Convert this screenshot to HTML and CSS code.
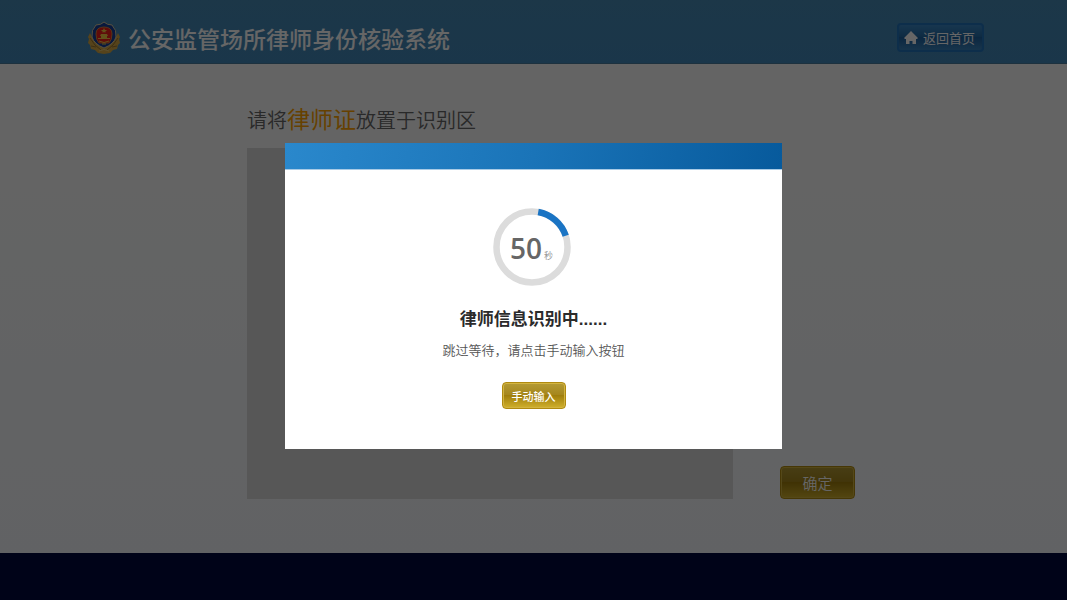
FILE: index.html
```html
<!DOCTYPE html>
<html lang="zh-CN">
<head>
    <meta charset="UTF-8">
    <meta name="viewport" content="width=device-width, initial-scale=1.0">
    <title>公安监管场所律师身份核验系统</title>
    <link rel="stylesheet" href="styles.css">
</head>
<body>
    <header class="header">
        <div class="brand">
            <svg class="badge" viewBox="0 0 34 34" aria-hidden="true">
                <!-- 麦穗 -->
                <path d="M3 12 L1 16 L2 18 L1 22 L3 24 L4 28 L8 29 L11 32 L17 33 L23 32 L26 29 L30 28 L31 24 L33 22 L32 18 L33 16 L31 12 L27 20 L17 26 L7 20 Z" fill="#d6a944"/>
                <path d="M3 17 L8 24 L14 29 M31 17 L26 24 L20 29 M4 25 L9 26 M30 25 L25 26" fill="none" stroke="#9a7430" stroke-width="1"/>
                <path d="M12 30 Q17 27 22 30" fill="none" stroke="#e8c878" stroke-width="1"/>
                <!-- 盾牌 -->
                <path d="M17 1 Q20 4 25 4 Q30 9 29 16 Q27 23 17 27 Q7 23 5 16 Q4 9 9 4 Q14 4 17 1 Z" fill="#173f98" stroke="#d8c9a0" stroke-width="1"/>
                <path d="M17 6 Q25 6 25 13 Q25 19 22 22 L12 22 Q9 19 9 13 Q9 6 17 6 Z" fill="#f0201b" stroke="#d8803a" stroke-width="1"/>
                <path d="M17 7 L18 9 L20 9 L18 11 L19 12 L17 11 L15 12 L16 11 L14 9 L16 9 Z" fill="#f5c842"/>
                <path d="M13 15 L14 13 L20 13 L21 15 L20 15 L20 17 L23 17 L23 18 L11 18 L11 17 L14 17 L14 15 Z" fill="#f5c842"/>
                <path d="M12 20 Q17 23 22 20 M15 23 h4" fill="none" stroke="#f5c842" stroke-width="1"/>
            </svg>
            <h1 class="title">公安监管场所律师身份核验系统</h1>
        </div>
        <a class="home-link" href="#">
            <svg class="home-icon" viewBox="0 0 14 14" aria-hidden="true">
                <path d="M7 0 L14 7 L13 8 L12 8 L12 13 L8.5 13 L8.5 10 L5.5 10 L5.5 13 L2 13 L2 8 L1 8 L0 7 Z" fill="#fff"/>
            </svg>
            返回首页
        </a>
    </header>

    <main class="main">
        <h2 class="tip">请将<em class="tip-key">律师证</em>放置于识别区</h2>
        <div class="scan-row">
            <div class="scan-area"></div>
            <button class="gold-btn confirm-btn" type="button">确定</button>
        </div>
    </main>

    <footer class="footer"></footer>

    <!-- 识别等待弹窗 -->
    <div class="mask">
        <section class="dialog" role="dialog" aria-modal="true" aria-labelledby="dialog-title">
            <div class="dialog-bar"></div>
            <div class="dialog-body">
                <div class="timer">
                    <svg class="ring" viewBox="0 0 78 78" aria-hidden="true">
                        <circle cx="39" cy="39" r="35.5" fill="none" stroke="#dcdcdc" stroke-width="6.5"/>
                        <path d="M45.2 4 A35.5 35.5 0 0 1 72.7 27.8" fill="none" stroke="#1a74c4" stroke-width="6.5"/>
                    </svg>
                    <div class="count"><span class="seconds">50</span><span class="unit">秒</span></div>
                </div>
                <h3 class="dialog-title" id="dialog-title">律师信息识别中......</h3>
                <p class="dialog-text">跳过等待，请点击手动输入按钮</p>
                <button class="gold-btn manual-btn" type="button">手动输入</button>
            </div>
        </section>
    </div>
</body>
</html>
```

FILE: styles.css
```css
* {
    box-sizing: border-box;
}

body {
    display: flex;
    flex-direction: column;
    min-height: 100vh;
    margin: 0;
    background: #f8f9fc;
    font-family: "Noto Sans CJK SC", sans-serif;
}

h1, h2, h3, p {
    margin: 0;
}

.header {
    display: flex;
    align-items: center;
    justify-content: space-between;
    height: 64px;
    padding: 12px 83px 0 87px;
    background: linear-gradient(#4689b5, #4388b8);
    border-bottom: 1px solid #4a7a9c;
}

.brand {
    display: flex;
    align-items: center;
    gap: 7px;
}

.badge {
    width: 34px;
    height: 34px;
}

.title {
    color: #fff;
    font-size: 23px;
    font-weight: 500;
    line-height: 32px;
}

.home-link {
    display: flex;
    align-items: center;
    gap: 5px;
    height: 29px;
    padding: 0 7px 0 5px;
    border: 2px solid #2273bb;
    border-radius: 4px;
    background: linear-gradient(#3b87c4, #256da8 45%, #1d62a0 50%, #3a83bd);
    color: #fff;
    font-size: 13px;
    font-weight: 400;
    text-decoration: none;
}

.home-icon {
    width: 14px;
    height: 14px;
}

.main {
    flex: 1;
    padding: 38px 212px 54px 247px;
    background: linear-gradient(#fbfbfb, #f3f6fa);
}

.tip {
    color: #666;
    font-size: 20px;
    font-weight: 350;
    line-height: 36px;
    margin-bottom: 10px;
}

.tip-key {
    color: #ffa200;
    font-size: 23px;
    font-style: normal;
    font-weight: 400;
    line-height: 32px;
}

.scan-row {
    display: flex;
    align-items: flex-end;
    gap: 47px;
}

.scan-area {
    flex: 1;
    height: 351px;
    background: #dadada;
}

.gold-btn {
    padding: 0;
    border: 1px solid #b08a10;
    border-radius: 4px;
    background: linear-gradient(#b39a35, #a5861c 48%, #a07e0c 50%, #d0b02c);
    box-shadow: inset 0 0 0 1px #d2b440;
    color: #fff;
    font-family: inherit;
    cursor: pointer;
}

.confirm-btn {
    width: 75px;
    height: 33px;
    font-size: 15px;
    font-weight: 350;
}

.footer {
    height: 47px;
    background: #00083c;
}

.mask {
    position: fixed;
    inset: 0;
    display: flex;
    align-items: center;
    justify-content: center;
    padding-bottom: 8px;
    background: rgba(0, 0, 0, 0.6);
}

.dialog {
    width: 497px;
    background: #fff;
}

.dialog-bar {
    height: 27px;
    background: linear-gradient(100deg, #2a88cc, #1a74b8 50%, #075a9c);
    border-bottom: 1px solid #a9cbe6;
}

.dialog-body {
    display: flex;
    flex-direction: column;
    align-items: center;
    padding: 38px 0 40px;
}

.timer {
    display: grid;
    place-items: center;
    margin-right: 4px;
}

.ring,
.count {
    grid-area: 1 / 1;
}

.ring {
    width: 78px;
    height: 78px;
}

.count {
    display: flex;
    align-items: baseline;
    gap: 2px;
    padding-top: 2px;
    color: #666;
}

.seconds {
    font-family: "Open Sans", "Noto Sans", sans-serif;
    font-size: 28px;
    font-weight: 600;
}

.unit {
    color: #999;
    font-size: 9px;
    font-weight: 400;
}

.dialog-title {
    margin-top: 20px;
    color: #2b2b2b;
    font-family: "Liberation Sans", "Noto Sans CJK SC", sans-serif;
    font-size: 17px;
    font-weight: 700;
    line-height: 28px;
}

.dialog-text {
    margin-top: 4px;
    color: #555;
    font-size: 13px;
    font-weight: 350;
    line-height: 24px;
}

.manual-btn {
    width: 64px;
    height: 27px;
    margin-top: 20px;
    font-size: 11px;
    font-weight: 500;
}
```
